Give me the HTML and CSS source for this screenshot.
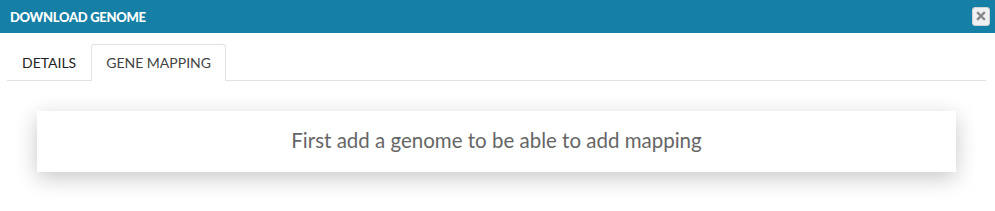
FILE: index.html
```html
<!DOCTYPE html>
<html lang="en">
<head>
  <meta charset="UTF-8">
  <title>Download genome</title>
  <link rel="stylesheet" href="styles.css">
</head>
<body>

<div class="modal">
  <div class="modal-header">
    <h4 class="modal-title">Download genome</h4>
    <button class="close-btn" title="Close">
      <svg width="10" height="10" viewBox="0 0 10 10">
        <path d="M2 2 L8 8 M8 2 L2 8" stroke="#888" stroke-width="2.4" stroke-linecap="square"/>
      </svg>
    </button>
  </div>

  <div class="modal-body">
    <ul class="tabs">
      <li class="tab">Details</li>
      <li class="tab active">Gene mapping</li>
    </ul>

    <div class="tab-content">
      <div class="notice">First add a genome to be able to add mapping</div>
    </div>
  </div>
</div>

</body>
</html>
```

FILE: styles.css
```css
body {
  margin: 0;
  font-family: Lato, "Open Sans", sans-serif;
  background-color: #ffffff;
}
.modal {
  width: 995px;
  height: 211px;
  overflow: hidden;
}
.modal-header {
  height: 33px;
  background-color: #167fa5;
  display: flex;
  align-items: center;
  justify-content: space-between;
  padding: 0 5px 0 10px;
}
.modal-title {
  margin: 0;
  color: #ffffff;
  font-size: 13px;
  font-weight: 900;
  text-transform: uppercase;
  letter-spacing: -0.3px;
}
.close-btn {
  width: 18px;
  height: 19px;
  padding: 0;
  margin-top: -1px;
  border: 1px solid #cfd3d6;
  border-radius: 3px;
  background-color: #eef0f1;
  display: flex;
  align-items: center;
  justify-content: center;
  cursor: pointer;
}
.modal-body {
  padding: 11px 9px 0 7px;
}
.tabs {
  list-style: none;
  margin: 0;
  padding: 0;
  display: flex;
  border-bottom: 1px solid #dfe2e6;
  height: 36px;
}
.tab {
  padding: 0 14px;
  line-height: 36px;
  font-size: 14px;
  color: #222;
  text-transform: uppercase;
  border: 1px solid transparent;
  border-bottom: none;
  border-radius: 3px 3px 0 0;
  margin-bottom: -1px;
}
.tab.active {
  background-color: #ffffff;
  border-color: #dfe2e6;
  color: #444;
  height: 36px;
}
.tab-content {
  padding: 30px 30px 0 30px;
}
.notice {
  background-color: #ffffff;
  height: 61px;
  line-height: 58px;
  text-align: center;
  font-size: 20.5px;
  color: #666;
  box-shadow: 0 6px 22px rgba(0, 0, 0, 0.22);
}
```
